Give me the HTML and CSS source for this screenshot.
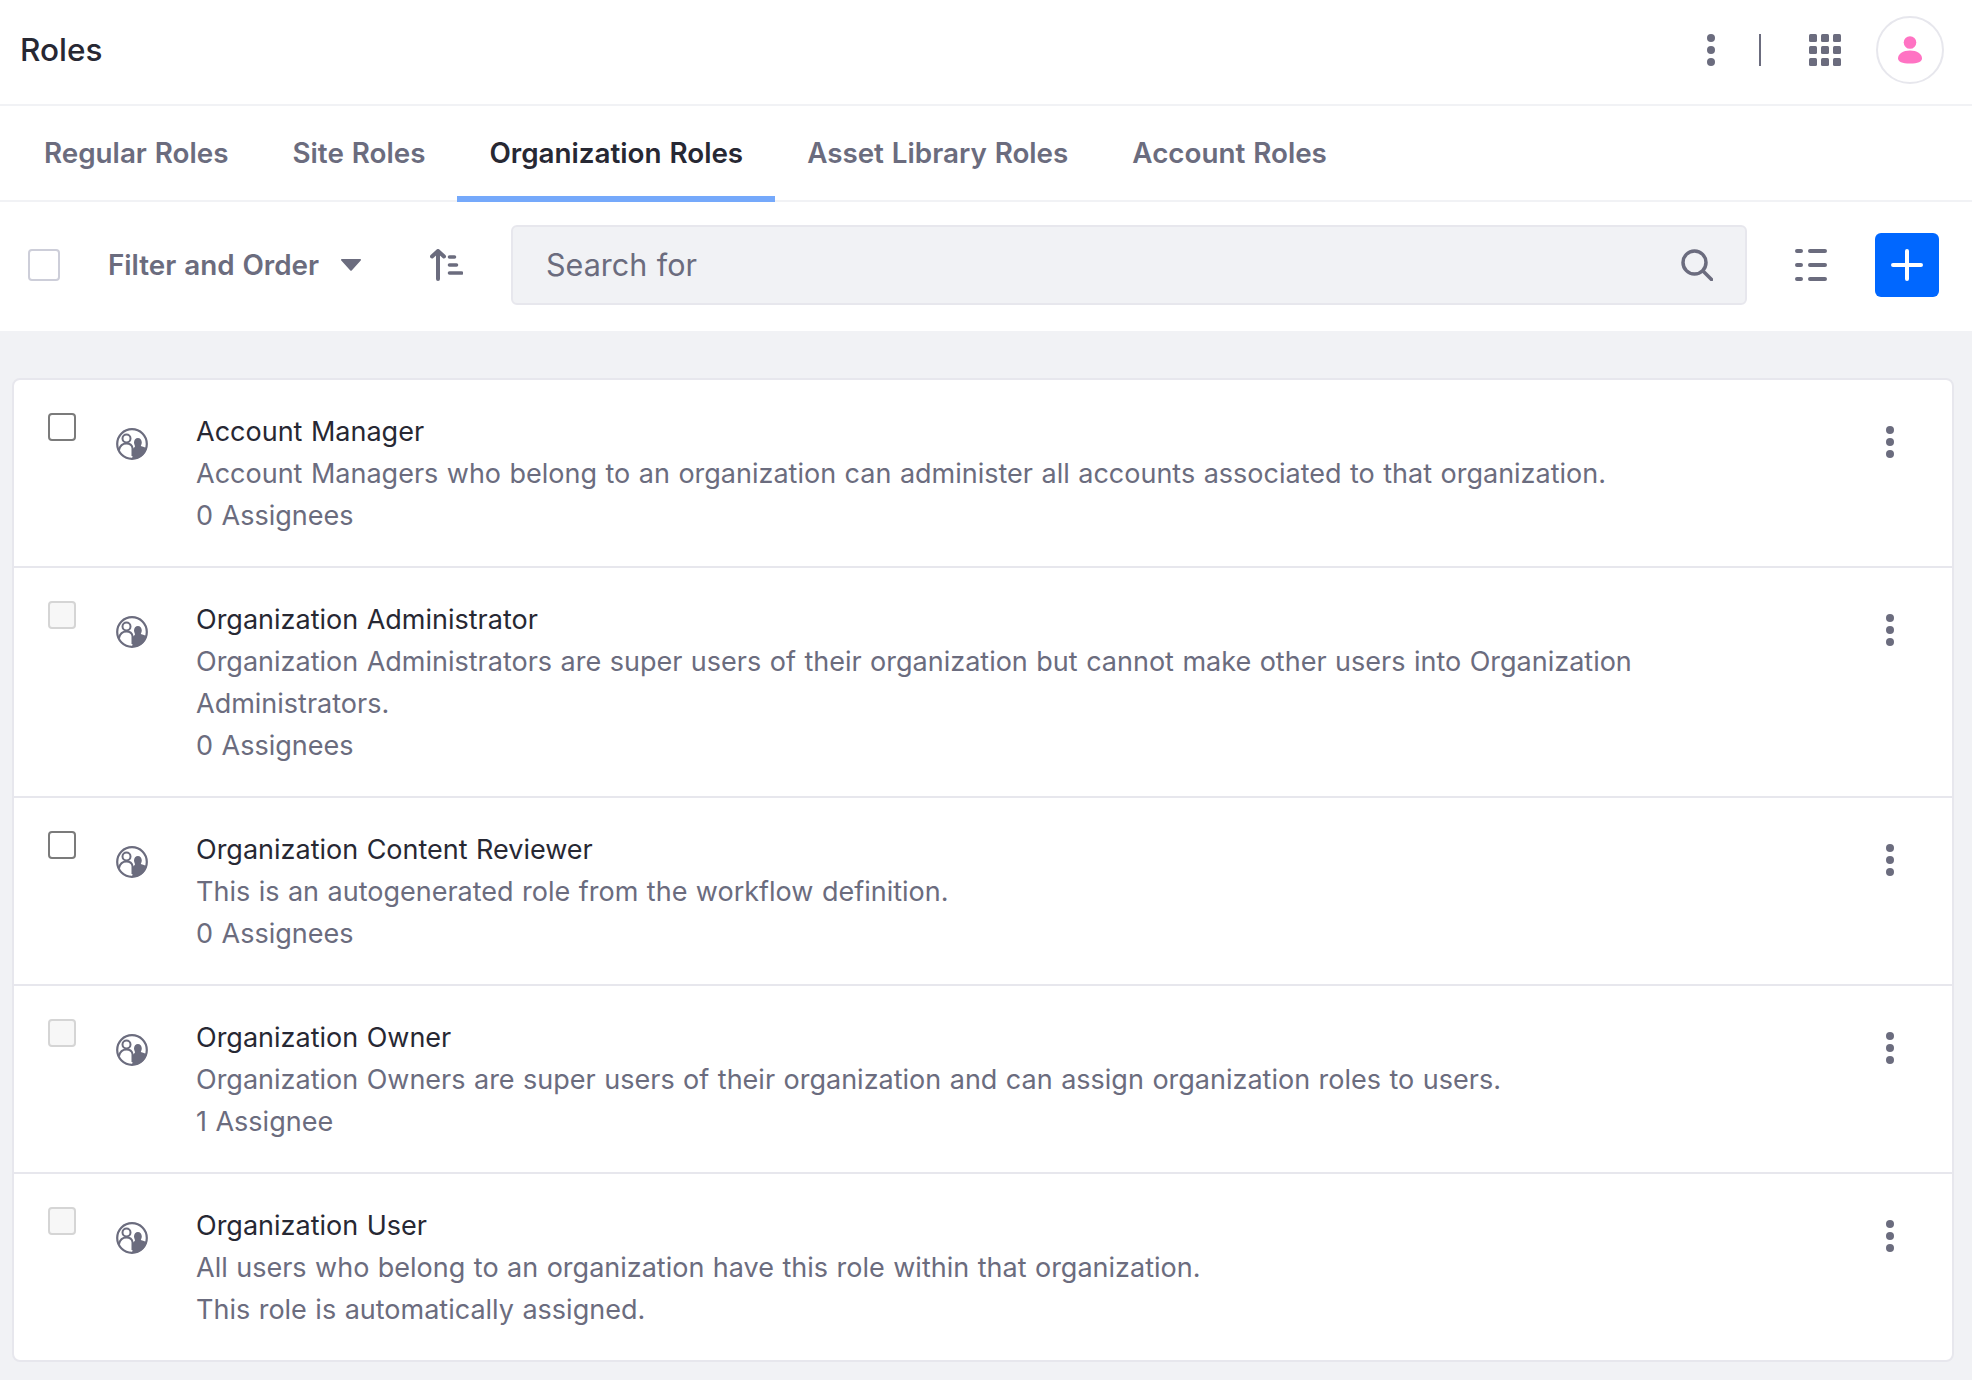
FILE: index.html
```html
<!DOCTYPE html>
<html lang="en">

<head>
    <meta charset="UTF-8">
    <meta name="viewport" content="width=device-width, initial-scale=1.0">
    <title>Roles</title>
    <link rel="stylesheet" href="styles.css">
</head>

<body>
    <svg class="sprites" width="0" height="0">
        <symbol id="kebab" viewBox="0 0 8 32">
            <circle cx="4" cy="4" r="4"></circle>
            <circle cx="4" cy="16" r="4"></circle>
            <circle cx="4" cy="28" r="4"></circle>
        </symbol>
        <symbol id="org" viewBox="0 0 32 32">
            <circle cx="16" cy="16" r="14.8" fill="#fff" stroke="#6b6c7e" stroke-width="2.2"></circle>
            <path fill="#6b6c7e" d="M18 14.5c0-2.6 1.7-4.5 3.9-4.5s3.9 1.9 3.9 4.5c0 1.2-.4 2.3-1 3.1.5 1 2 1.3 3.6 1.6.8.1 1.6.5 2 1C29.600 26.500 24 31 16 30.900c.8-2.700.8-6.400.4-9.900.8-.6 2-1.300 2.600-2.400.3-.6-1-2.200-1-4.100z"></path>
            <circle cx="10.500" cy="10.500" r="4" fill="none" stroke="#6b6c7e" stroke-width="2"></circle>
            <path fill="none" stroke="#6b6c7e" stroke-width="2" d="M3 22c1-4.500 4-6.500 7.500-6.500s5.500 1.500 6 4.500v8"></path>
        </symbol>
    </svg>

    <header class="topbar">
        <h1 class="page-title">Roles</h1>
        <div class="top-actions">
            <svg class="kebab"><use href="#kebab"></use></svg>
            <span class="divider"></span>
            <svg class="apps" viewBox="0 0 32 32">
                <rect x="0" y="0" width="8" height="8" rx="1.500"></rect>
                <rect x="12" y="0" width="8" height="8" rx="1.500"></rect>
                <rect x="24" y="0" width="8" height="8" rx="1.500"></rect>
                <rect x="0" y="12" width="8" height="8" rx="1.500"></rect>
                <rect x="12" y="12" width="8" height="8" rx="1.500"></rect>
                <rect x="24" y="12" width="8" height="8" rx="1.500"></rect>
                <rect x="0" y="24" width="8" height="8" rx="1.500"></rect>
                <rect x="12" y="24" width="8" height="8" rx="1.500"></rect>
                <rect x="24" y="24" width="8" height="8" rx="1.500"></rect>
            </svg>
            <div class="avatar">
                <svg viewBox="0 0 24 28">
                    <circle cx="12" cy="6.500" r="6.300"></circle>
                    <path d="M12 14.500c7 0 12 3.500 12 8 0 3-4 5-12 5s-12-2-12-5c0-4.500 5-8 12-8z"></path>
                </svg>
            </div>
        </div>
    </header>

    <nav class="tabs">
        <a class="tab">Regular Roles</a>
        <a class="tab">Site Roles</a>
        <a class="tab active">Organization Roles</a>
        <a class="tab">Asset Library Roles</a>
        <a class="tab">Account Roles</a>
    </nav>

    <div class="toolbar">
        <span class="check check-top"></span>
        <span class="filter">Filter and Order</span>
        <svg class="caret" viewBox="0 0 20 12"><path d="M1 0h18c.9 0 1.300 1 .7 1.600l-9 9.800c-.4.400-1 .4-1.400 0l-9-9.800C-.3 1 .1 0 1 0z"></path></svg>
        <svg class="sort" viewBox="0 0 33 32">
            <path d="M8 30V2M2 7.500L8 2l6 5.500"></path>
            <path d="M19.500 8h5M19.500 16h7M19.500 24h12" stroke-width="3.600"></path>
        </svg>
        <div class="search">
            <span>Search for</span>
            <svg class="search-icon" viewBox="0 0 32 32">
                <circle cx="13.500" cy="13.500" r="11.500"></circle>
                <path d="M22 22l8.500 8.500"></path>
            </svg>
        </div>
        <svg class="list-view" viewBox="0 0 32 32">
            <path d="M2 2h4M15 2h15M2 16h4M15 16h15M2 30h4M15 30h15"></path>
        </svg>
        <button class="add" type="button">
            <svg viewBox="0 0 32 32"><path d="M16 2v28M2 16h28"></path></svg>
        </button>
    </div>

    <main class="content">
        <ul class="role-list">
            <li class="role">
                <span class="check"></span>
                <svg class="role-icon"><use href="#org"></use></svg>
                <div class="role-text">
                    <h2>Account Manager</h2>
                    <p>Account Managers who belong to an organization can administer all accounts associated to that organization.</p>
                    <p>0 Assignees</p>
                </div>
                <svg class="kebab role-menu"><use href="#kebab"></use></svg>
            </li>
            <li class="role">
                <span class="check disabled"></span>
                <svg class="role-icon"><use href="#org"></use></svg>
                <div class="role-text">
                    <h2>Organization Administrator</h2>
                    <p>Organization Administrators are super users of their organization but cannot make other users into Organization Administrators.</p>
                    <p>0 Assignees</p>
                </div>
                <svg class="kebab role-menu"><use href="#kebab"></use></svg>
            </li>
            <li class="role">
                <span class="check"></span>
                <svg class="role-icon"><use href="#org"></use></svg>
                <div class="role-text">
                    <h2>Organization Content Reviewer</h2>
                    <p>This is an autogenerated role from the workflow definition.</p>
                    <p>0 Assignees</p>
                </div>
                <svg class="kebab role-menu"><use href="#kebab"></use></svg>
            </li>
            <li class="role">
                <span class="check disabled"></span>
                <svg class="role-icon"><use href="#org"></use></svg>
                <div class="role-text">
                    <h2>Organization Owner</h2>
                    <p>Organization Owners are super users of their organization and can assign organization roles to users.</p>
                    <p>1 Assignee</p>
                </div>
                <svg class="kebab role-menu"><use href="#kebab"></use></svg>
            </li>
            <li class="role">
                <span class="check disabled"></span>
                <svg class="role-icon"><use href="#org"></use></svg>
                <div class="role-text">
                    <h2>Organization User</h2>
                    <p>All users who belong to an organization have this role within that organization.</p>
                    <p>This role is automatically assigned.</p>
                </div>
                <svg class="kebab role-menu"><use href="#kebab"></use></svg>
            </li>
        </ul>
    </main>
</body>

</html>
```

FILE: styles.css
```css
* {
    margin: 0;
    padding: 0;
    box-sizing: border-box;
}

body {
    background-color: #fff;
    color: #6b6c7e;
    font-family: Inter, "Liberation Sans", sans-serif;
    font-size: 27px;
    line-height: 42px;
    word-spacing: 0.900px;
}

.sprites {
    position: absolute;
}

.topbar {
    display: flex;
    align-items: center;
    justify-content: space-between;
    height: 106px;
    padding: 0 28px 4px 20px;
    border-bottom: 2px solid #f1f2f5;
}

.page-title {
    color: #272833;
    font-size: 31.500px;
    font-weight: 500;
}

.top-actions {
    display: flex;
    align-items: center;
}

.kebab {
    display: block;
    width: 8px;
    height: 32px;
    fill: #6b6c7e;
}

.divider {
    width: 2px;
    height: 32px;
    margin-left: 44px;
    background-color: #6b6c7e;
}

.apps {
    width: 32px;
    height: 32px;
    margin-left: 48px;
    fill: #6b6c7e;
}

.avatar {
    display: flex;
    align-items: center;
    justify-content: center;
    width: 68px;
    height: 68px;
    margin-left: 35px;
    border: 2px solid #e7e7ed;
    border-radius: 50%;
}

.avatar svg {
    width: 24px;
    height: 28px;
    fill: #ff73c3;
}

.tabs {
    display: flex;
    height: 96px;
    padding-left: 12px;
    border-bottom: 2px solid #f1f2f5;
}

.tab {
    height: 96px;
    padding: 26px 32px 0;
    font-size: 27.800px;
    font-weight: 600;
}

.tab.active {
    color: #272833;
    border-bottom: 6px solid #75a9fb;
}

.toolbar {
    display: flex;
    align-items: center;
    height: 129px;
    padding: 0 0 3px 28px;
}

.check {
    display: block;
    flex-shrink: 0;
    width: 28px;
    height: 28px;
    background-color: #fff;
    border: 2px solid #7b7b7b;
    border-radius: 4px;
}

.check.disabled {
    background-color: #f7f7f7;
    border-color: #d5d5d5;
}

.check-top {
    width: 32px;
    height: 32px;
    border-color: #cdced9;
}

.filter {
    margin-left: 48px;
    font-size: 27.800px;
    font-weight: 600;
}

.caret {
    width: 20px;
    height: 12px;
    margin-left: 22px;
    fill: #6b6c7e;
}

.sort {
    width: 33px;
    height: 32px;
    margin-left: 69px;
    fill: none;
    stroke: #6b6c7e;
    stroke-width: 4;
    stroke-linecap: round;
    stroke-linejoin: round;
}

.search {
    display: flex;
    align-items: center;
    justify-content: space-between;
    width: 1236px;
    height: 80px;
    margin-left: 48px;
    padding: 0 32px 0 33px;
    background-color: #f1f2f5;
    border: 2px solid #e7e7ed;
    border-radius: 6px;
    font-size: 30.500px;
}

.search-icon {
    width: 32px;
    height: 32px;
    fill: none;
    stroke: #6b6c7e;
    stroke-width: 3.500;
    stroke-linecap: round;
}

.list-view {
    width: 32px;
    height: 32px;
    margin-left: 48px;
    fill: none;
    stroke: #6b6c7e;
    stroke-width: 4;
    stroke-linecap: round;
}

.add {
    display: flex;
    align-items: center;
    justify-content: center;
    width: 64px;
    height: 64px;
    margin-left: 48px;
    background-color: #0067ff;
    border: none;
    border-radius: 6px;
}

.add svg {
    width: 32px;
    height: 32px;
    fill: none;
    stroke: #fff;
    stroke-width: 4;
    stroke-linecap: round;
}

.content {
    min-height: 1049px;
    padding: 47px 18px 0 12px;
    background-color: #f1f2f5;
}

.role-list {
    list-style: none;
    background-color: #fff;
    border: 2px solid #e7e7ed;
    border-radius: 8px;
}

.role {
    display: flex;
    padding: 31px 0 29px 34px;
    border-bottom: 2px solid #e7e7ed;
}

.role:last-child {
    border-bottom: none;
}

.role .check {
    margin-top: 2px;
}

.role-icon {
    flex-shrink: 0;
    width: 32px;
    height: 32px;
    margin: 17px 0 0 40px;
}

.role-text {
    width: 1455px;
    margin-left: 48px;
}

.role-text h2 {
    color: #272833;
    font-size: 27px;
    font-weight: 400;
}

.role-menu {
    flex-shrink: 0;
    margin: 15px 0 0 235px;
}
```
